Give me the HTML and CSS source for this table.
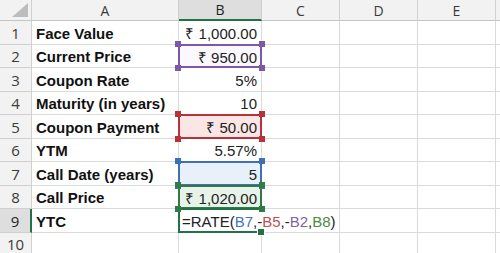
FILE: index.html
```html
<!DOCTYPE html>
<html>
<head>
<meta charset="utf-8">
<link rel="stylesheet" href="styles.css">
</head>
<body>
<div class="sheet">
  <div class="corner hdr"><svg class="tri" width="16" height="14" viewBox="0 0 16 14"><polygon points="16,0 16,14 0,14" fill="#bdbdbd"/></svg></div>
  <div class="hdr col">A</div>
  <div class="hdr col sel">B</div>
  <div class="hdr col">C</div>
  <div class="hdr col">D</div>
  <div class="hdr col">E</div>
  <div class="hdr col"></div>

  <div class="hdr rowh">1</div><div class="c lab">Face Value</div><div class="c num">₹ 1,000.00</div><div class="c"></div><div class="c"></div><div class="c"></div><div class="c"></div>
  <div class="hdr rowh">2</div><div class="c lab">Current Price</div><div class="c num ref purple"><span class="hd"></span>₹ 950.00</div><div class="c"></div><div class="c"></div><div class="c"></div><div class="c"></div>
  <div class="hdr rowh">3</div><div class="c lab">Coupon Rate</div><div class="c num">5%</div><div class="c"></div><div class="c"></div><div class="c"></div><div class="c"></div>
  <div class="hdr rowh">4</div><div class="c lab">Maturity (in years)</div><div class="c num">10</div><div class="c"></div><div class="c"></div><div class="c"></div><div class="c"></div>
  <div class="hdr rowh">5</div><div class="c lab">Coupon Payment</div><div class="c num ref red"><span class="hd"></span>₹ 50.00</div><div class="c"></div><div class="c"></div><div class="c"></div><div class="c"></div>
  <div class="hdr rowh">6</div><div class="c lab">YTM</div><div class="c num">5.57%</div><div class="c"></div><div class="c"></div><div class="c"></div><div class="c"></div>
  <div class="hdr rowh">7</div><div class="c lab">Call Date (years)</div><div class="c num ref blue"><span class="hd"></span>5</div><div class="c"></div><div class="c"></div><div class="c"></div><div class="c"></div>
  <div class="hdr rowh">8</div><div class="c lab">Call Price</div><div class="c num ref green"><span class="hd"></span>₹ 1,020.00</div><div class="c"></div><div class="c"></div><div class="c"></div><div class="c"></div>
  <div class="hdr rowh sel">9</div><div class="c lab">YTC</div><div class="c active"><span class="formula">=RATE(<span class="f-blue">B7</span>,-<span class="f-red">B5</span>,-<span class="f-purple">B2</span>,<span class="f-green">B8</span>)</span><span class="caret"></span><span class="fill"></span></div><div class="c"></div><div class="c"></div><div class="c"></div><div class="c"></div>
  <div class="hdr rowh">10</div><div class="c lab"></div><div class="c"></div><div class="c"></div><div class="c"></div><div class="c"></div><div class="c"></div>
</div>
</body>
</html>
```
FILE: styles.css
```css
html, body {
  margin: 0;
  padding: 0;
  background: #ffffff;
  overflow: hidden;
}
.sheet {
  display: grid;
  grid-template-columns: 32px 147px 83px 78px 78px 78px 20px;
  grid-template-rows: 21px repeat(10, 23.5px);
  width: 516px;
  font-family: "Liberation Sans", Arial, sans-serif;
  font-size: 15px;
  color: #111;
}
.hdr {
  background: #f2f2f2;
  color: #3a3a3a;
  font-family: "Open Sans", "Liberation Sans", sans-serif;
  font-size: 14px;
  display: flex;
  align-items: center;
  justify-content: center;
  border-right: 1px solid #d0d0d0;
  border-bottom: 1px solid #d0d0d0;
  box-sizing: border-box;
}
.hdr.col {
  border-bottom: 1px solid #c4c4c4;
}
.hdr.col.sel {
  background: #dedede;
  border-bottom: 2px solid #217346;
  color: #1f1f1f;
}
.hdr.rowh {
  font-size: 15px;
  justify-content: center;
  padding-top: 1px;
}
.hdr.rowh.sel {
  background: #dedede;
  border-right: 2px solid #217346;
  color: #1f1f1f;
}
.corner {
  position: relative;
  border-bottom: 1px solid #c4c4c4;
}
.tri {
  position: absolute;
  right: 3px;
  bottom: 3px;
}
.c {
  border-right: 1px solid #dadada;
  border-bottom: 1px solid #dadada;
  box-sizing: border-box;
  display: flex;
  align-items: center;
  padding: 2px 4px 0 4px;
  white-space: nowrap;
  position: relative;
}
.lab {
  font-weight: bold;
  color: #111;
}
.num {
  justify-content: flex-end;
  color: #222;
}
.ref {
  --rc: #7b52ab;
}
.ref::after {
  content: "";
  position: absolute;
  left: -1px;
  top: -1px;
  right: -1px;
  bottom: -1px;
  border: 2px solid var(--rc);
  box-sizing: border-box;
  pointer-events: none;
}
.ref .hd {
  position: absolute;
  left: -4px;
  top: -4px;
  right: -4px;
  bottom: -4px;
  background:
    linear-gradient(var(--rc), var(--rc)) left top / 6px 6px no-repeat,
    linear-gradient(var(--rc), var(--rc)) right top / 6px 6px no-repeat,
    linear-gradient(var(--rc), var(--rc)) left bottom / 6px 6px no-repeat,
    linear-gradient(var(--rc), var(--rc)) right bottom / 6px 6px no-repeat;
  z-index: 2;
}
.purple { --rc: #7e57a8; background: #fbf9fd; }
.red { --rc: #b73239; background: #fbe6e6; }
.blue { --rc: #3f6fb5; background: #e8f0fa; }
.green { --rc: #2f7a45; background: #e7f2e9; }
.active {
  overflow: visible;
  padding-left: 3px;
  border-right-color: transparent;
}
.active::after {
  content: "";
  position: absolute;
  left: -1px;
  top: -1px;
  right: -1px;
  bottom: -1px;
  border: 2px solid #217346;
  border-right: none;
  box-sizing: border-box;
}
.formula {
  position: relative;
  z-index: 3;
  color: #222;
  background: #fff;
}
.caret {
  display: inline-block;
  width: 1px;
  height: 17px;
  background: #000;
  margin-left: 1px;
  position: relative;
  z-index: 3;
}
.fill {
  position: absolute;
  right: -4px;
  bottom: -4px;
  width: 6px;
  height: 6px;
  background: #217346;
  border: 1px solid #fff;
  z-index: 4;
}
.f-blue { color: #4472c4; }
.f-red { color: #c0504d; }
.f-purple { color: #8064a2; }
.f-green { color: #4e8a3b; }
```
